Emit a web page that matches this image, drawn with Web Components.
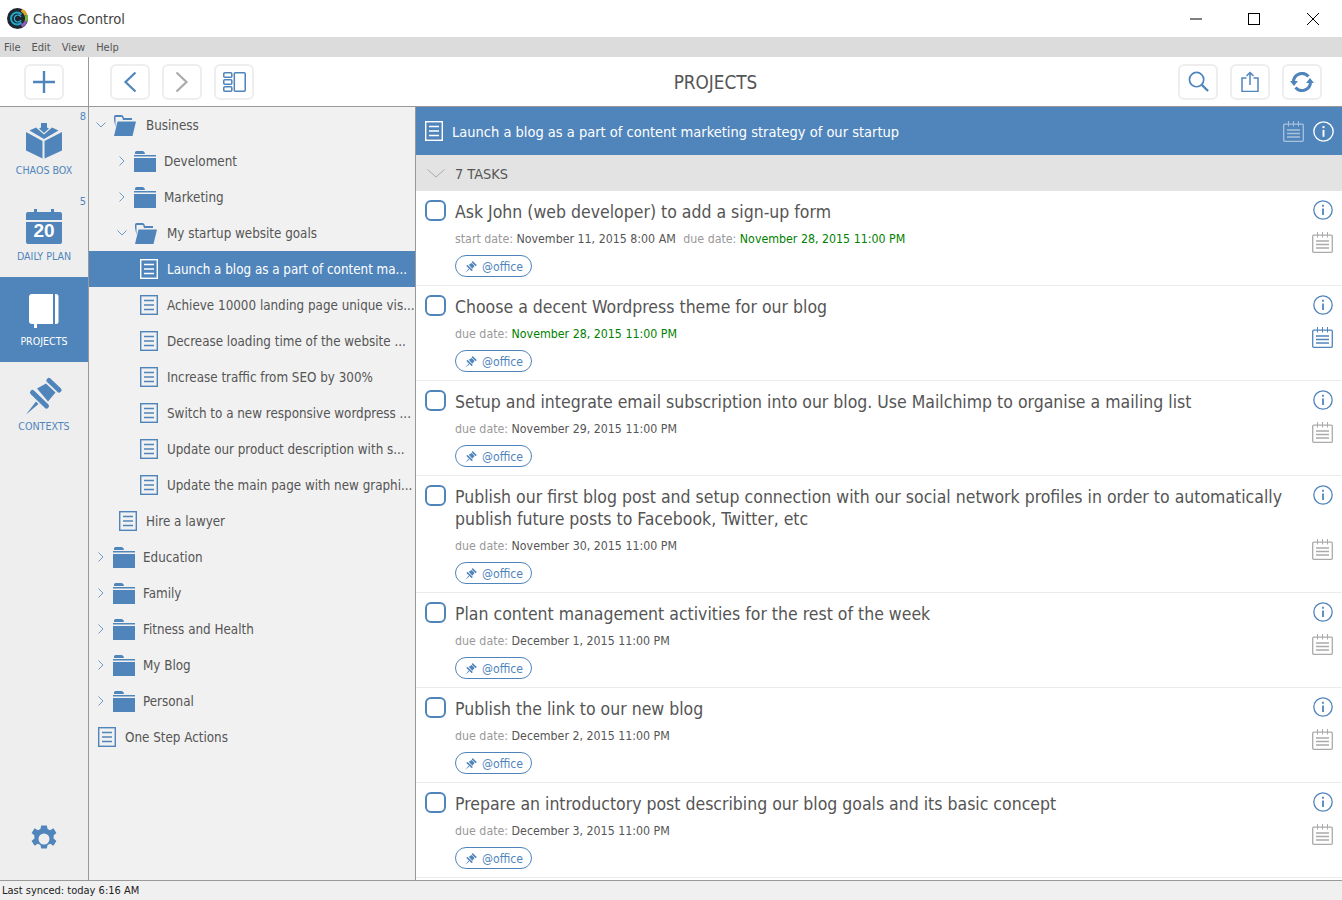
<!DOCTYPE html>
<html>
<head>
<meta charset="utf-8">
<title>Chaos Control</title>
<style>
  html, body { margin: 0; height: 100%; overflow: hidden; }
  body { font-family: "DejaVu Sans", "Noto Sans", sans-serif; font-stretch: condensed; color: #555; background: #fff; }
</style>
</head>
<body>
<app-window>
  <title-bar slot="title"></title-bar>
  <menu-bar slot="menu"></menu-bar>
  <tool-bar slot="tools"></tool-bar>
  <side-nav slot="nav">
    <nav-item icon="box" count="8">CHAOS BOX</nav-item>
    <nav-item icon="calendar" count="5">DAILY PLAN</nav-item>
    <nav-item icon="notebook" active>PROJECTS</nav-item>
    <nav-item icon="pin">CONTEXTS</nav-item>
  </side-nav>
  <tree-view slot="tree">
    <tree-row level="0" kind="open">Business</tree-row>
    <tree-row level="1" kind="folder">Develoment</tree-row>
    <tree-row level="1" kind="folder">Marketing</tree-row>
    <tree-row level="1" kind="open">My startup website goals</tree-row>
    <tree-row level="2" kind="doc" selected>Launch a blog as a part of content ma...</tree-row>
    <tree-row level="2" kind="doc">Achieve 10000 landing page unique vis...</tree-row>
    <tree-row level="2" kind="doc">Decrease loading time of the website ...</tree-row>
    <tree-row level="2" kind="doc">Increase traffic from SEO by 300%</tree-row>
    <tree-row level="2" kind="doc">Switch to a new responsive wordpress ...</tree-row>
    <tree-row level="2" kind="doc">Update our product description with s...</tree-row>
    <tree-row level="2" kind="doc">Update the main page with new graphi...</tree-row>
    <tree-row level="1" kind="doc">Hire a lawyer</tree-row>
    <tree-row level="0" kind="folder">Education</tree-row>
    <tree-row level="0" kind="folder">Family</tree-row>
    <tree-row level="0" kind="folder">Fitness and Health</tree-row>
    <tree-row level="0" kind="folder">My Blog</tree-row>
    <tree-row level="0" kind="folder">Personal</tree-row>
    <tree-row level="0" kind="doc">One Step Actions</tree-row>
  </tree-view>
  <task-panel slot="tasks" heading="Launch a blog as a part of content marketing strategy of our startup" count="7 TASKS">
    <task-item start="November 11, 2015 8:00 AM" due="November 28, 2015 11:00 PM" green>Ask John (web developer) to add a sign-up form</task-item>
    <task-item due="November 28, 2015 11:00 PM" green planned>Choose a decent Wordpress theme for our blog</task-item>
    <task-item due="November 29, 2015 11:00 PM">Setup and integrate email subscription into our blog. Use Mailchimp to organise a mailing list</task-item>
    <task-item due="November 30, 2015 11:00 PM">Publish our first blog post and setup connection with our social network profiles in order to automatically publish future posts to Facebook, Twitter, etc</task-item>
    <task-item due="December 1, 2015 11:00 PM">Plan content management activities for the rest of the week</task-item>
    <task-item due="December 2, 2015 11:00 PM">Publish the link to our new blog</task-item>
    <task-item due="December 3, 2015 11:00 PM">Prepare an introductory post describing our blog goals and its basic concept</task-item>
  </task-panel>
  <status-bar slot="status">Last synced: today 6:16 AM</status-bar>
</app-window>

<script>
const BLUE = '#5085bc';

const PIN_PATHS = `<path d="M0 37.500 10 24.500 12.500 27z"/>
  <path d="M6.500 15.500 20.500 29" stroke="${BLUE}" stroke-width="5" stroke-linecap="round"/>
  <path d="M23 3.500 33 13" stroke="${BLUE}" stroke-width="5" stroke-linecap="round"/>
  <path d="M11 11.500 20 6.500 29.500 15.500 22 24.500z"/>`;

const icons = {
  plus: `<svg width="24" height="24" viewBox="0 0 24 24"><path d="M12 1v22M1 12h22" stroke="${BLUE}" stroke-width="2.4" fill="none"/></svg>`,
  back: `<svg width="14" height="24" viewBox="0 0 14 24"><path d="M12.500 2.500 2.500 12l10 9.500" stroke="${BLUE}" stroke-width="2.200" fill="none"/></svg>`,
  forward: `<svg width="14" height="24" viewBox="0 0 14 24"><path d="M1.500 2.500 11.500 12l-10 9.500" stroke="#aaa" stroke-width="2.200" fill="none"/></svg>`,
  panels: `<svg width="23" height="20" viewBox="0 0 24 22" preserveAspectRatio="none" fill="none" stroke="${BLUE}" stroke-width="1.600"><rect x=".8" y=".8" width="8.400" height="5" rx="1"/><rect x=".8" y="8.500" width="8.400" height="5" rx="1"/><rect x=".8" y="16.200" width="8.400" height="5" rx="1"/><rect x="11.800" y=".8" width="11.400" height="20.400" rx="1"/></svg>`,
  search: `<svg width="21" height="21" viewBox="0 0 22 22" fill="none" stroke="${BLUE}"><circle cx="9" cy="9" r="7.500" stroke-width="1.800"/><path d="M14.500 14.500 21 21" stroke-width="2.400"/></svg>`,
  share: `<svg width="18" height="21" viewBox="0 0 18 21" fill="none" stroke="${BLUE}" stroke-width="1.500"><path d="M5.500 7H1v13.500h16V7h-4.500"/><path d="M9 14V1.500M5.500 5 9 1.500 12.500 5"/></svg>`,
  sync: `<svg width="24" height="20" viewBox="0 0 24 20" fill="none"><path d="M3.500 10a8.500 8.500 0 0 1 15-5.500" stroke="${BLUE}" stroke-width="3"/><path d="M20.500 10a8.500 8.500 0 0 1-15 5.500" stroke="${BLUE}" stroke-width="3"/><path d="M0 9h8l-4 5zM16 11h8l-4-5z" fill="${BLUE}"/></svg>`,
  box: `<svg width="36" height="36" viewBox="0 0 36 36" fill="${BLUE}"><path d="M15 0h6v4.500l2 1-5 4.500-5-4.500 2-1z"/><path d="M3.500 7.500 10 4.500 18 11.500 26 4.500 32.500 7.500 18 16z"/><path d="M0 9l16.500 9v17.500L0 27.500z"/><path d="M36 9 18.500 18v17.500L36 27.500z"/></svg>`,
  notebook: `<svg width="30" height="35" viewBox="0 0 30 35" fill="#fff"><path d="M3 0h21v30H3a3 3 0 0 1-3-3V3a3 3 0 0 1 3-3z"/><path d="M26 0h1a2.500 2.500 0 0 1 2.500 2.500v25A2.500 2.500 0 0 1 27 30h-1z"/><rect x="5" y="30" width="3" height="4"/></svg>`,
  pin: `<svg width="36" height="38" viewBox="0 0 36 38" fill="${BLUE}">${PIN_PATHS}</svg>`,
  gear: `<svg width="28" height="28" viewBox="0 0 28 28"><path fill="${BLUE}" fill-rule="evenodd" d="M11.200.5h5.600l.8 3.600 2.600 1.100 3.200-1.900 3 4.800-2.800 2.400v3l2.800 2.400-3 4.800-3.200-1.900-2.600 1.100-.8 3.600h-5.600l-.8-3.600-2.600-1.100-3.200 1.900-3-4.800 2.800-2.400v-3L1.600 8.100l3-4.800 3.200 1.900 2.600-1.100zM14 8.500a5.500 5.500 0 1 0 0 11 5.500 5.500 0 0 0 0-11z"/></svg>`,
  folder: `<svg width="22" height="21" viewBox="0 0 22 21" fill="${BLUE}"><path d="M1 1.500Q1 0 2.500 0h6Q10 0 10.500 1.500L11 3H1z"/><rect y="4" width="22" height="1.500"/><path d="M0 7h22v14H0z"/></svg>`,
  open: `<svg width="23" height="21" viewBox="0 0 23 21" fill="${BLUE}"><path d="M1 5V1.500Q1 0 2.500 0h6Q10 0 10.500 1.500L11 3h8v2H10L9 2H2.500v10z"/><path d="M4.500 6.500H23L19.500 21H1z"/></svg>`,
  chevRight: (c = BLUE) => `<svg width="6" height="10" viewBox="0 0 6 10"><path d="M.5.5 5 5 .5 9.500" stroke="${c}" stroke-width="1" fill="none" opacity=".8"/></svg>`,
  chevDown: (c = BLUE) => `<svg width="10" height="6" viewBox="0 0 10 6"><path d="M.5.5 5 5 9.500.5" stroke="${c}" stroke-width="1" fill="none" opacity=".8"/></svg>`,
  doc: (c = BLUE) => `<svg width="18" height="20" viewBox="0 0 18 20" fill="none" stroke="${c}" stroke-width="1.400"><rect x=".7" y=".7" width="16.600" height="18.600"/><path d="M4 5.500h10M4 10h10M4 14.500h10"/></svg>`,
  info: (c = BLUE) => `<svg width="20" height="20" viewBox="0 0 20 20" fill="none" stroke="${c}"><circle cx="10" cy="10" r="9.200" stroke-width="1.300"/><path d="M10 8.500V15" stroke-width="1.800"/><path d="M10 4.800v2" stroke-width="1.800"/></svg>`,
  plan: (c = '#aaa') => `<svg width="21" height="21" viewBox="0 0 21 21" fill="none" stroke="${c}" stroke-width="1.300"><rect x=".7" y="3.200" width="19.600" height="17.100" rx="1"/><path d="M5.500 0v5.500M10.500 0v5.500M15.500 0v5.500" stroke-width="1"/><path d="M4 9h13M4 12.500h13M4 16h13"/></svg>`,
  miniPin: `<svg width="12" height="12" viewBox="0 0 36 38" fill="${BLUE}">${PIN_PATHS}</svg>`,
  logo: `<svg width="21" height="21" viewBox="0 0 21 21" fill="none"><circle cx="10.500" cy="10.500" r="10.500" fill="#1d2730"/>
    <path d="M14.500 2.200a9 9 0 0 1 4.500 5" stroke="#e2a52a" stroke-width="3"/>
    <path d="M19 7.200a9 9 0 0 1 0 6" stroke="#74b33c" stroke-width="3"/>
    <path d="M19 13.200a9 9 0 0 1-4.500 5" stroke="#8a5fc0" stroke-width="3"/>
    <path d="M14.500 6.500a6 6 0 1 0 0 8" stroke="#1fa6c9" stroke-width="2"/>
    <path d="M14 9a3.500 3.500 0 1 0 0 3" stroke="#36b3d6" stroke-width="1.200"/></svg>`
};

function shadow(el, html) {
  el.attachShadow({ mode: 'open' }).innerHTML = html;
}

class AppWindow extends HTMLElement {
  constructor() {
    super();
    shadow(this, `<style>
      :host { display: grid; width: 1342px; height: 900px; grid-template-columns: 89px 327px 1fr; grid-template-rows: 37px 20px 50px 773px 20px; }
      ::slotted([slot=title]), ::slotted([slot=menu]), ::slotted([slot=tools]), ::slotted([slot=status]) { grid-column: 1 / -1; }
    </style>
    <slot name="title"></slot><slot name="menu"></slot><slot name="tools"></slot>
    <slot name="nav"></slot><slot name="tree"></slot><slot name="tasks"></slot><slot name="status"></slot>`);
  }
}

class TitleBar extends HTMLElement {
  constructor() {
    super();
    shadow(this, `<style>
      :host { display: flex; align-items: center; background: #fff; padding-left: 7px; }
      .name { font-size: 14.600px; color: #444; margin-left: 5px; }
      .ctrls { margin-left: auto; display: flex; }
      .ctrls span { width: 59px; display: flex; justify-content: center; }
      .ctrls span:first-child { width: 56px; }
    </style>
    ${icons.logo}<span class="name">Chaos Control</span>
    <div class="ctrls">
      <span><svg width="12" height="12"><path d="M0 6h12" stroke="#000"/></svg></span>
      <span><svg width="12" height="12"><rect x=".5" y=".5" width="11" height="11" fill="none" stroke="#000"/></svg></span>
      <span><svg width="12" height="12"><path d="M0 0l12 12M12 0 0 12" stroke="#000"/></svg></span>
    </div>`);
  }
}

class MenuBar extends HTMLElement {
  constructor() {
    super();
    shadow(this, `<style>
      :host { display: flex; align-items: center; gap: 11px; background: #dcdcdc; padding-left: 4px; box-sizing: border-box; font-size: 11px; color: #555; }
    </style><span>File</span><span>Edit</span><span>View</span><span>Help</span>`);
  }
}

class ToolButton extends HTMLElement {
  constructor() {
    super();
    shadow(this, `<style>
      :host { display: flex; align-items: center; justify-content: center; box-sizing: border-box; width: 40px; height: 36px; border: 2px solid #eee; border-radius: 6px; background: #fff; }
    </style>${icons[this.getAttribute('icon')]}`);
  }
}

class ToolBar extends HTMLElement {
  constructor() {
    super();
    shadow(this, `<style>
      :host { display: grid; grid-template-columns: 88px 1px 1fr auto 1fr; align-items: center; background: #fff; border-bottom: 1px solid #999; box-sizing: border-box; height: 50px; }
      .add { display: flex; justify-content: center; }
      .line { background: #999; height: 100%; }
      .group { display: flex; gap: 12px; }
      .left { padding-left: 21px; }
      .right { justify-content: flex-end; padding-right: 20px; }
      h1 { margin: 0; font-size: 18.800px; font-weight: 400; color: #555; padding-top: 2px; }
    </style>
    <div class="add"><tool-button icon="plus"></tool-button></div>
    <div class="line"></div>
    <div class="group left"><tool-button icon="back"></tool-button><tool-button icon="forward"></tool-button><tool-button icon="panels"></tool-button></div>
    <h1>PROJECTS</h1>
    <div class="group right"><tool-button icon="search"></tool-button><tool-button icon="share"></tool-button><tool-button icon="sync"></tool-button></div>`);
  }
}

class SideNav extends HTMLElement {
  constructor() {
    super();
    shadow(this, `<style>
      :host { display: flex; flex-direction: column; position: relative; background: #eee; border-right: 1px solid #999; box-sizing: border-box; }
      .gear { margin-top: auto; padding-bottom: 27px; display: flex; justify-content: center; }
    </style><slot></slot><div class="gear">${icons.gear}</div>`);
  }
}

class NavItem extends HTMLElement {
  constructor() {
    super();
    const count = this.getAttribute('count');
    const name = this.getAttribute('icon');
    const art = name === 'calendar'
      ? `<div class="cal"><svg width="36" height="36" viewBox="0 0 36 36"><path fill="${BLUE}" d="M2 4h6V1h3v3h14V1h3v3h6a2 2 0 0 1 2 2v6H0V6a2 2 0 0 1 2-2zM0 14h36v20a2 2 0 0 1-2 2H2a2 2 0 0 1-2-2z"/></svg><b>20</b></div>`
      : icons[name];
    shadow(this, `<style>
      :host { display: flex; flex-direction: column; align-items: center; position: relative; height: 85px; box-sizing: border-box; padding-top: 15px; color: ${BLUE}; font-size: 10.600px; }
      :host([active]) { background: ${BLUE}; color: #fff; }
      .art { height: 38px; display: flex; align-items: center; justify-content: center; }
      .cal { position: relative; width: 36px; height: 36px; }
      .cal b { position: absolute; left: 0; right: 0; top: 11px; text-align: center; color: #fff; font: 700 19px/24px "Liberation Sans", sans-serif; }
      .label { margin-top: 4px; line-height: 14px; }
      :host(:first-of-type) .label { margin-top: 3px; }
      .count { position: absolute; right: 2px; top: 2px; font-size: 11px; line-height: 15px; }
    </style>
    ${count ? `<span class="count">${count}</span>` : ''}
    <div class="art">${art}</div><div class="label"><slot></slot></div>`);
  }
}

class TreeView extends HTMLElement {
  constructor() {
    super();
    shadow(this, `<style>
      :host { display: block; background: #f1f1f1; border-right: 1px solid #999; box-sizing: border-box; overflow: hidden; }
    </style><slot></slot>`);
  }
}

class TreeRow extends HTMLElement {
  constructor() {
    super();
    const kind = this.getAttribute('kind');
    const level = Number(this.getAttribute('level'));
    const selected = this.hasAttribute('selected');
    let chev = '';
    if (kind === 'folder') chev = `<span class="chev">${icons.chevRight()}</span>`;
    if (kind === 'open') chev = `<span class="chev">${icons.chevDown()}</span>`;
    const art = kind === 'doc' ? icons.doc(selected ? '#fff' : BLUE) : icons[kind];
    const gap = { doc: 9, folder: 8, open: 10 }[kind];
    shadow(this, `<style>
      :host { display: flex; align-items: center; height: 36px; box-sizing: border-box; padding-left: ${(kind === 'doc' ? 9 : 6) + level * 21}px; font-size: 13.300px; color: #555; white-space: nowrap; overflow: hidden; }
      :host([selected]) { background: ${BLUE}; color: #fff; }
      .chev { width: 12px; margin-right: 6px; display: flex; justify-content: center; }
      .art { display: flex; margin-right: ${gap}px; }
    </style>${chev}<span class="art">${art}</span><slot></slot>`);
  }
}

class TaskPanel extends HTMLElement {
  constructor() {
    super();
    shadow(this, `<style>
      :host { display: flex; flex-direction: column; background: #fff; overflow: hidden; }
      .head { flex: none; height: 48px; background: ${BLUE}; color: #fff; display: flex; align-items: center; padding: 0 8px 0 9px; font-size: 14.500px; }
      .head .doc { display: flex; margin-right: 9px; }
      .head .text, .sub .text { padding-top: 2px; }
      .head .actions { margin-left: auto; display: flex; align-items: center; gap: 9px; }
      .head .actions svg:last-child { width: 21px; height: 21px; }
      .sub { flex: none; height: 36px; background: #e3e3e3; display: flex; align-items: center; padding-left: 11px; font-size: 14.400px; color: #555; }
      .sub svg { margin-right: 10px; }
    </style>
    <div class="head"><span class="doc">${icons.doc('#fff')}</span><span class="text">${this.getAttribute('heading')}</span>
      <span class="actions">${icons.plan('#a9c2dc')}${icons.info('#fff')}</span></div>
    <div class="sub"><svg width="18" height="9" viewBox="0 0 18 9"><path d="M.5.5 9 8 17.500.5" stroke="#aaa" fill="none"/></svg><span class="text">${this.getAttribute('count')}</span></div>
    <slot></slot>`);
  }
}

class TaskItem extends HTMLElement {
  constructor() {
    super();
    const start = this.getAttribute('start');
    const due = this.getAttribute('due');
    const green = this.hasAttribute('green');
    shadow(this, `<style>
      :host { display: flex; flex: none; box-sizing: border-box; padding: 9px 9px 8px 9px; border-bottom: 1px solid #ebebeb; }
      .check { flex: none; width: 21px; height: 21px; box-sizing: border-box; border: 2px solid ${BLUE}; border-radius: 6px; margin-right: 9px; }
      .body { flex: 1; min-width: 0; }
      .title { font-size: 17.500px; line-height: 22px; color: #555; position: relative; top: 1px; }
      .meta { font-size: 12.300px; line-height: 18px; margin-top: 8px; color: #555; white-space: nowrap; }
      .meta i { font-style: normal; color: #999; }
      .meta .due { margin-left: 4px; }
      .meta .green { color: #008000; }
      .tag { display: inline-flex; align-items: center; box-sizing: border-box; height: 22px; margin-top: 7px; padding: 1px 8px 0 9px; border: 1px solid ${BLUE}; border-radius: 11px; color: ${BLUE}; font-size: 12.200px; vertical-align: top; }
      .tag svg { margin-right: 5px; }
      .side { flex: none; width: 21px; margin-left: 20px; padding-bottom: 24px; display: flex; flex-direction: column; align-items: center; justify-content: space-between; }
    </style>
    <div class="check"></div>
    <div class="body">
      <div class="title"><slot></slot></div>
      <div class="meta">${start ? `<i>start date:</i> ${start} ` : ''}<i class="${start ? 'due' : ''}">due date:</i> <span class="${green ? 'green' : ''}">${due}</span></div>
      <div class="tag">${icons.miniPin}@office</div>
    </div>
    <div class="side">${icons.info()}${icons.plan(this.hasAttribute('planned') ? BLUE : '#aaa')}</div>`);
  }
}

class StatusBar extends HTMLElement {
  constructor() {
    super();
    shadow(this, `<style>
      :host { display: flex; align-items: center; box-sizing: border-box; background: #f0f0f0; border-top: 1px solid #999; padding: 0 0 1px 2px; font-size: 11px; color: #222; }
    </style><slot></slot>`);
  }
}

customElements.define('app-window', AppWindow);
customElements.define('title-bar', TitleBar);
customElements.define('menu-bar', MenuBar);
customElements.define('tool-button', ToolButton);
customElements.define('tool-bar', ToolBar);
customElements.define('side-nav', SideNav);
customElements.define('nav-item', NavItem);
customElements.define('tree-view', TreeView);
customElements.define('tree-row', TreeRow);
customElements.define('task-panel', TaskPanel);
customElements.define('task-item', TaskItem);
customElements.define('status-bar', StatusBar);
</script>
</body>
</html>
